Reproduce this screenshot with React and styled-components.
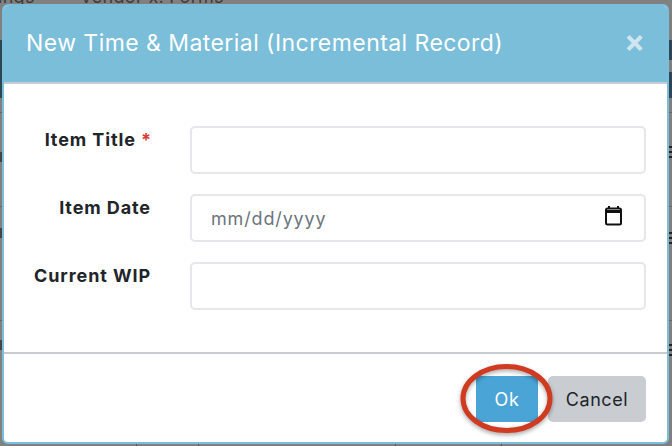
import React from "react"
import styled, { createGlobalStyle } from "styled-components"

const GlobalStyle = createGlobalStyle`
  html, body {
    margin: 0;
    padding: 0;
    height: 100%;
    overflow: hidden;
    background: #808080;
  }
  * {
    box-sizing: border-box;
  }
`

const Page = styled.div`
  position: relative;
  width: 672px;
  height: 446px;
  overflow: hidden;
  padding: 4px 3px 2px 2px;
  background: #808080;
  font-family: Inter, "Liberation Sans", sans-serif;
`

const BehindText = styled.div`
  position: absolute;
  top: -14px;
  left: ${props => props.$left}px;
  font-size: 18px;
  line-height: 22px;
  letter-spacing: 0.3px;
  color: #3c3c3c;
`

// bits of the dimmed page that stick out beside the dialog
const BehindMark = styled.div`
  position: absolute;
  top: ${props => props.$top}px;
  left: ${props => props.$left}px;
  width: ${props => props.$w}px;
  height: ${props => props.$h}px;
  background: ${props => props.$color};
`

const Modal = styled.div`
  position: relative;
  display: flex;
  flex-direction: column;
  height: 100%;
  background: #fff;
  border: 2px solid #7abeda;
  border-radius: 6px;
  overflow: hidden;
`

const Header = styled.header`
  display: flex;
  align-items: center;
  justify-content: space-between;
  height: 80px;
  padding: 0 22px 0 22px;
  margin-top: -2px;
  background: #7abeda;
  border-bottom: 2px solid #c8ccd0;
`

const Title = styled.h4`
  margin: 0;
  color: #fff;
  font-size: 23px;
  font-weight: 400;
  letter-spacing: 0.44px;
`

const Close = styled.span`
  margin-bottom: 6px;
  color: #cfe6f0;
  font-size: 31px;
  font-weight: 700;
  line-height: 1;
`

const Body = styled.div`
  flex: 1;
  display: flex;
  flex-direction: column;
  gap: 20px;
  padding: 42px 21px 0 0;
  border-bottom: 2px solid #c8ccd0;
`

const Row = styled.div`
  display: flex;
  gap: 39px;
`

const Label = styled.label`
  width: 147px;
  padding-top: 3px;
  color: #212529;
  font-size: 18px;
  font-weight: 700;
  letter-spacing: 0.9px;
  white-space: nowrap;
  text-align: right;
`

const Required = styled.span`
  margin-left: 5px;
  color: #dc3c32;
  letter-spacing: 0;
`

const Field = styled.div`
  flex: 1;
  display: flex;
  align-items: center;
  justify-content: space-between;
  height: 48px;
  padding: 0 22px 0 19px;
  border: 2px solid #e6e7ec;
  border-radius: 5px;
  color: #6c757d;
  font-size: 18px;
  letter-spacing: 0.85px;

  svg {
    margin-bottom: 5px;
  }
`

const Footer = styled.footer`
  display: flex;
  justify-content: flex-end;
  align-items: center;
  gap: 10px;
  height: 88px;
  padding: 2px 21px 0 0;
`

const Button = styled.button`
  height: 46px;
  border: 0;
  border-radius: ${props => (props.$primary ? "0" : "5px")};
  padding: 0;
  width: ${props => (props.$primary ? "62px" : "98px")};
  background: ${props => (props.$primary ? "#4aa5d6" : "#c9ccd1")};
  color: ${props => (props.$primary ? "#fff" : "#212529")};
  font-family: inherit;
  font-size: 18px;
  letter-spacing: 0.6px;
`

const Ring = styled.svg`
  position: absolute;
  left: 458px;
  top: 362px;
  overflow: visible;
  pointer-events: none;
  filter: drop-shadow(0 2px 2px rgba(0, 0, 0, 0.35));
`

const marks = [
  { top: 40, left: 0, w: 2, h: 58, color: "#2c4656" },
  { top: 40, left: 669, w: 3, h: 20, color: "#2c4656" },
  { top: 72, left: 669, w: 3, h: 26, color: "#2c4656" },
  { top: 112, left: 0, w: 2, h: 1, color: "#666" },
  { top: 112, left: 669, w: 3, h: 1, color: "#666" },
  { top: 206, left: 0, w: 2, h: 1, color: "#666" },
  { top: 206, left: 669, w: 3, h: 1, color: "#666" },
  { top: 320, left: 0, w: 2, h: 1, color: "#666" },
  { top: 320, left: 669, w: 3, h: 1, color: "#666" },
  { top: 146, left: 669, w: 3, h: 2, color: "#222" },
  { top: 151, left: 669, w: 3, h: 2, color: "#222" },
  { top: 156, left: 669, w: 3, h: 2, color: "#222" },
  { top: 232, left: 669, w: 3, h: 2, color: "#222" },
  { top: 237, left: 669, w: 3, h: 2, color: "#222" },
  { top: 242, left: 669, w: 3, h: 2, color: "#222" },
  { top: 344, left: 669, w: 3, h: 2, color: "#222" },
  { top: 349, left: 669, w: 3, h: 2, color: "#222" },
  { top: 354, left: 669, w: 3, h: 2, color: "#222" },
  { top: 152, left: 0, w: 2, h: 10, color: "#444" },
  { top: 228, left: 0, w: 2, h: 10, color: "#444" },
  { top: 340, left: 0, w: 2, h: 10, color: "#444" },
  { top: 444, left: 136, w: 1, h: 2, color: "#555" },
  { top: 444, left: 198, w: 1, h: 2, color: "#555" },
  { top: 444, left: 395, w: 1, h: 2, color: "#555" },
  { top: 444, left: 501, w: 1, h: 2, color: "#555" },
]

const CalendarIcon = () => (
  <svg width="17" height="20" viewBox="0 0 17 20" fill="none">
    <path d="M4 0v3M13 0v3" stroke="#111" strokeWidth="2" />
    <rect x="1" y="2.5" width="15" height="16" rx="1.5" stroke="#111" strokeWidth="2" />
    <path d="M1 5.5h15" stroke="#111" strokeWidth="3" />
  </svg>
)

const App = () => {
  return (
    <>
      <GlobalStyle />
      <Page>
        <BehindText $left={-2}>ings</BehindText>
        <BehindText $left={80}>Vendor x: Forms</BehindText>
        {marks.map((m, i) => (
          <BehindMark key={i} $top={m.top} $left={m.left} $w={m.w} $h={m.h} $color={m.color} />
        ))}
        <Modal>
          <Header>
            <Title>New Time &amp; Material (Incremental Record)</Title>
            <Close>×</Close>
          </Header>
          <Body>
            <Row>
              <Label>
                Item Title<Required>*</Required>
              </Label>
              <Field />
            </Row>
            <Row>
              <Label>Item Date</Label>
              <Field>
                mm/dd/yyyy
                <CalendarIcon />
              </Field>
            </Row>
            <Row>
              <Label>Current WIP</Label>
              <Field />
            </Row>
          </Body>
          <Footer>
            <Button $primary>Ok</Button>
            <Button>Cancel</Button>
          </Footer>
        </Modal>
        <Ring width="96" height="76" viewBox="0 0 96 76">
          <ellipse cx="48.5" cy="36.5" rx="43.5" ry="32" fill="none" stroke="#cf3a20" strokeWidth="5" />
        </Ring>
      </Page>
    </>
  )
}

export default App
